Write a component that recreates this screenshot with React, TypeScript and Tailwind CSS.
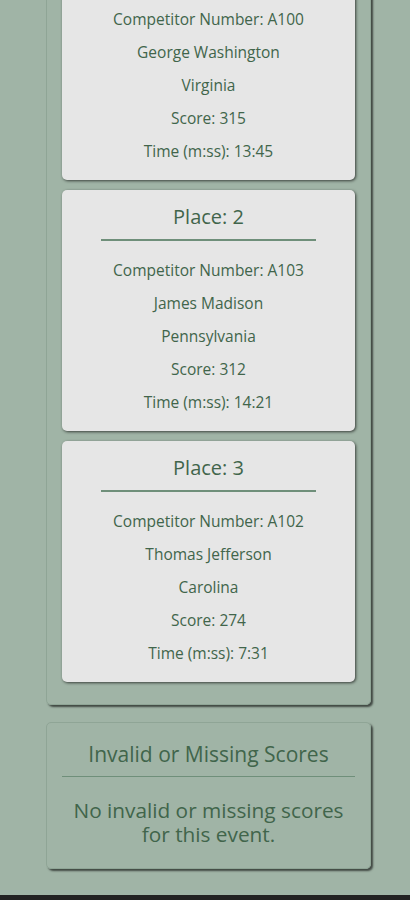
import React from "react";

const rows = [
  { place: 1, num: "A100", name: "George Washington", state: "Virginia", score: 315, time: "13:45" },
  { place: 2, num: "A103", name: "James Madison", state: "Pennsylvania", score: 312, time: "14:21" },
  { place: 3, num: "A102", name: "Thomas Jefferson", state: "Carolina", score: 274, time: "7:31" },
];

function Card({ r }: { r: (typeof rows)[number] }) {
  return (
    <div className="h-[241px] bg-[#e6e6e6] rounded-[5px] shadow-[1px_1px_3px_rgba(0,0,0,0.65)] flex flex-col items-center pt-[13px]">
      <div className="text-[20px] leading-[28px]">Place: {r.place}</div>
      <div className="w-[215px] h-[2px] bg-[#6f8f7a] mt-[8px] mb-[13px]" />
      {[`Competitor Number: ${r.num}`, r.name, r.state, `Score: ${r.score}`, `Time (m:ss): ${r.time}`].map((t, i) => (
        <div key={i} className="text-[15.5px] leading-[33px]">{t}</div>
      ))}
    </div>
  );
}

export default function App() {
  return (
    <div
      className="h-[900px] overflow-hidden bg-[#a0b4a6] flex flex-col text-[#41654b]"
      style={{ fontFamily: '"Open Sans", sans-serif' }}
    >
      <div className="-mt-[78px] ml-[46px] w-[325px] border border-[#8fa596] rounded-[5px] shadow-[2px_2px_2px_rgba(0,0,0,0.6)] pt-[16px] px-[15px] pb-[22px] flex flex-col gap-[10px] shrink-0">
        {rows.map((r) => (
          <Card key={r.place} r={r} />
        ))}
      </div>
      <div className="mt-[17px] ml-[46px] w-[325px] h-[147px] border border-[#8fa596] rounded-[5px] shadow-[2px_2px_2px_rgba(0,0,0,0.6)] px-[15px] pt-[17px] flex flex-col items-center shrink-0">
        <div className="text-[21px] leading-[28px]">Invalid or Missing Scores</div>
        <div className="w-full h-[1px] bg-[#6f8f7a] mt-[8px] mb-[21px]" />
        <div className="text-[20.8px] leading-[24px] text-center">
          No invalid or missing scores for this event.
        </div>
      </div>
      <div className="mt-[26px] h-[100px] bg-[#222222] shrink-0" />
    </div>
  );
}
